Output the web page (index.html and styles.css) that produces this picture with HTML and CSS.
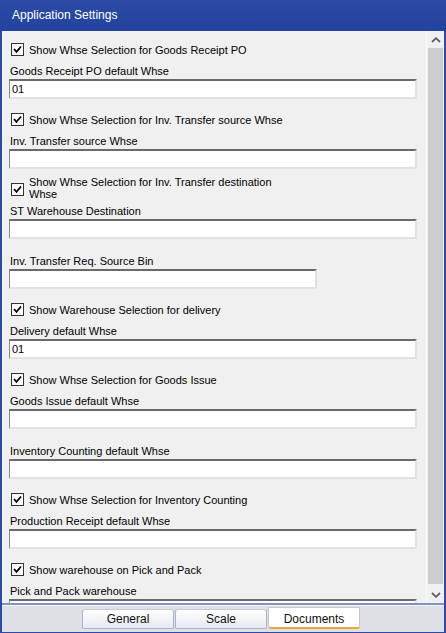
FILE: index.html
```html
<!DOCTYPE html>
<html>
<head>
<meta charset="utf-8">
<link rel="stylesheet" href="styles.css">
</head>
<body>
<div class="window">
  <div class="titlebar">Application Settings</div>
  <div class="main">
    <div class="content">
      <div class="check"><span class="box"><svg viewBox="0 0 9 9" width="9" height="9"><path d="M1 4 L3.5 6.8 L8 1.5" fill="none" stroke="#000" stroke-width="1.8"/></svg></span><span class="ctext">Show Whse Selection for Goods Receipt PO</span></div>
      <div class="label">Goods Receipt PO default Whse</div>
      <div class="input">01</div>

      <div class="check"><span class="box"><svg viewBox="0 0 9 9" width="9" height="9"><path d="M1 4 L3.5 6.8 L8 1.5" fill="none" stroke="#000" stroke-width="1.8"/></svg></span><span class="ctext">Show Whse Selection for Inv. Transfer source Whse</span></div>
      <div class="label">Inv. Transfer source Whse</div>
      <div class="input"></div>

      <div class="check tall"><span class="box"><svg viewBox="0 0 9 9" width="9" height="9"><path d="M1 4 L3.5 6.8 L8 1.5" fill="none" stroke="#000" stroke-width="1.8"/></svg></span><span class="ctext wrap">Show Whse Selection for Inv. Transfer destination Whse</span></div>
      <div class="label">ST Warehouse Destination</div>
      <div class="input"></div>

      <div class="label">Inv. Transfer Req. Source Bin</div>
      <div class="input short"></div>

      <div class="check"><span class="box"><svg viewBox="0 0 9 9" width="9" height="9"><path d="M1 4 L3.5 6.8 L8 1.5" fill="none" stroke="#000" stroke-width="1.8"/></svg></span><span class="ctext">Show Warehouse Selection for delivery</span></div>
      <div class="label">Delivery default Whse</div>
      <div class="input">01</div>

      <div class="check"><span class="box"><svg viewBox="0 0 9 9" width="9" height="9"><path d="M1 4 L3.5 6.8 L8 1.5" fill="none" stroke="#000" stroke-width="1.8"/></svg></span><span class="ctext">Show Whse Selection for Goods Issue</span></div>
      <div class="label">Goods Issue default Whse</div>
      <div class="input"></div>

      <div class="label">Inventory Counting default Whse</div>
      <div class="input"></div>

      <div class="check"><span class="box"><svg viewBox="0 0 9 9" width="9" height="9"><path d="M1 4 L3.5 6.8 L8 1.5" fill="none" stroke="#000" stroke-width="1.8"/></svg></span><span class="ctext">Show Whse Selection for Inventory Counting</span></div>
      <div class="label">Production Receipt default Whse</div>
      <div class="input"></div>

      <div class="check"><span class="box"><svg viewBox="0 0 9 9" width="9" height="9"><path d="M1 4 L3.5 6.8 L8 1.5" fill="none" stroke="#000" stroke-width="1.8"/></svg></span><span class="ctext">Show warehouse on Pick and Pack</span></div>
      <div class="label">Pick and Pack warehouse</div>
      <div class="input"></div>
    </div>
    <div class="scrollbar">
      <div class="arrow"><svg viewBox="0 0 10 6" width="10" height="6"><path d="M1 5 L5 1.2 L9 5" fill="none" stroke="#606060" stroke-width="1.8"/></svg></div>
      <div class="track"><div class="thumb"></div></div>
      <div class="arrow"><svg viewBox="0 0 10 6" width="10" height="6"><path d="M1 1 L5 4.8 L9 1" fill="none" stroke="#606060" stroke-width="1.8"/></svg></div>
    </div>
  </div>
  <div class="tabbar">
    <div class="tab">General</div>
    <div class="tab">Scale</div>
    <div class="tab active">Documents</div>
  </div>
</div>
</body>
</html>
```

FILE: styles.css
```css
html, body {
  margin: 0;
  padding: 0;
}
body {
  width: 446px;
  height: 633px;
  overflow: hidden;
  font-family: "Liberation Sans", Arial, sans-serif;
  font-size: 11px;
  color: #000;
}
.window {
  width: 446px;
  height: 633px;
  box-sizing: border-box;
  border-left: 2px solid #2b4aa3;
  border-right: 2px solid #2b4aa3;
  border-bottom: 1px solid #2b4aa3;
  display: flex;
  flex-direction: column;
  background: #f0f0f0;
}
.titlebar {
  height: 31px;
  flex: none;
  margin: 0 -2px;
  background: linear-gradient(#2a4aa6, #2343a0);
  color: #fff;
  font-size: 12px;
  line-height: 31px;
  padding-left: 12px;
}
.main {
  height: 572px;
  flex: none;
  display: flex;
  border-bottom: 2px solid #7e95c4;
}
.content {
  flex: 1;
  overflow: hidden;
  padding: 7px 0 0 7px;
  border-right: 1px solid #fafafa;
}
.check {
  height: 20px;
  box-sizing: border-box;
  padding-top: 3px;
  display: flex;
  align-items: center;
  overflow: hidden;
  padding-left: 2px;
}
.check.tall {
  height: 22px;
  margin-bottom: -2px;
  padding-top: 0;
  align-items: flex-end;
}
.check.tall .box {
  align-self: center;
}
.box {
  width: 11px;
  height: 11px;
  flex: none;
  border: 1px solid #333;
  background: #fff;
  display: flex;
  align-items: center;
  justify-content: center;
  margin-right: 5px;
}
.ctext {
  white-space: nowrap;
}
.ctext.wrap {
  white-space: normal;
  width: 252px;
  flex: none;
  line-height: 12px;
}
.label {
  height: 21px;
  line-height: 26px;
  padding-left: 1px;
}
.input {
  width: 408px;
  height: 20px;
  box-sizing: border-box;
  background: #fff;
  border-top: 2px solid #6a6a6a;
  border-left: 1px solid #8a8a8a;
  border-right: 2px solid #e2e2e2;
  border-bottom: 2px solid #e2e2e2;
  line-height: 16px;
  padding-left: 2px;
  margin-bottom: 9px;
}
.input.short {
  width: 308px;
}
.scrollbar {
  width: 17px;
  flex: none;
  display: flex;
  flex-direction: column;
  background: #f0f0f0;
}
.arrow {
  height: 17px;
  flex: none;
  display: flex;
  align-items: center;
  justify-content: center;
}
.track {
  flex: 1;
  padding: 0 1px;
  display: flex;
  flex-direction: column;
}
.thumb {
  flex: 1;
  background: #cdcdcd;
  margin: 0 0 2px;
}
.tabbar {
  flex: 1;
  background: #dfdfe6;
  border-top: 1px solid #f4f4f8;
  display: flex;
  padding-left: 80px;
  gap: 1px;
  align-items: flex-start;
  padding-top: 3px;
}
.tab {
  width: 92px;
  height: 20px;
  box-sizing: border-box;
  border: 1px solid #a9b4c8;
  border-top-color: #c4cbd8;
  border-radius: 3px 3px 2px 2px;
  background: linear-gradient(#ffffff, #e4e9f2);
  text-align: center;
  line-height: 19px;
  font-size: 12px;
  color: #111;
}
.tab.active {
  height: 22px;
  background: #fff;
  border: 1px solid #c9c9c9;
  border-bottom: 2px solid #e8a63a;
  border-radius: 0 0 3px 3px;
  margin-top: -2px;
  line-height: 22px;
}
```
